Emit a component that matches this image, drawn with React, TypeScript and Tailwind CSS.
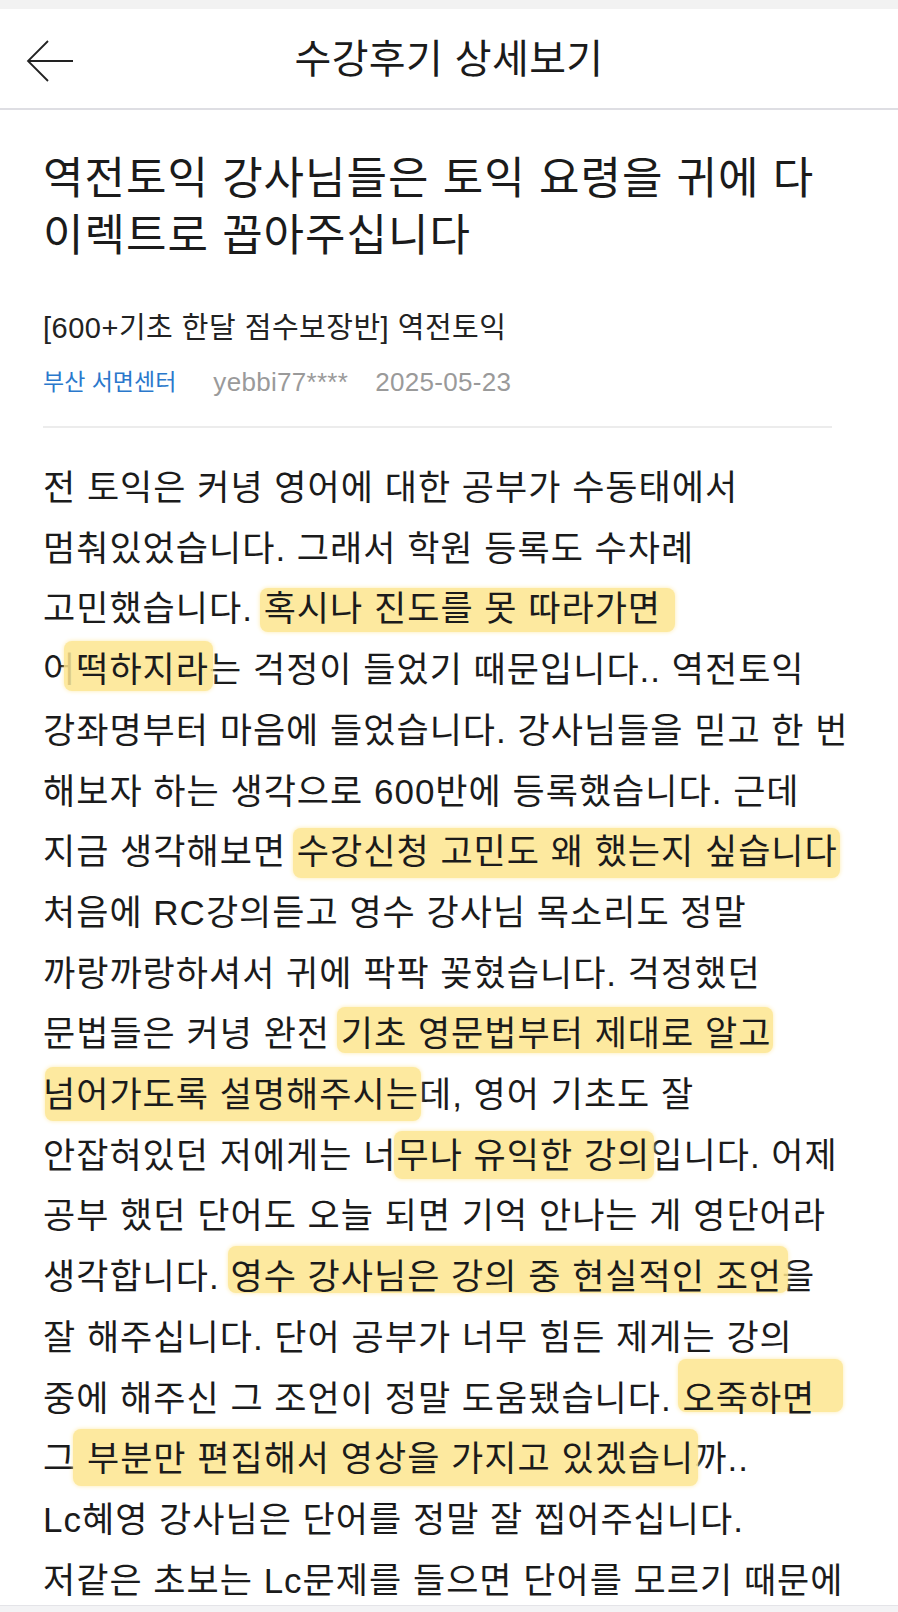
import React from "react";

const FONT = "font-['Liberation_Sans','Noto_Sans_CJK_KR',sans-serif]";

type MarkProps = { children: React.ReactNode; box?: string };

// marker-pen style highlight drawn behind the words
const Mark: React.FC<MarkProps> = ({ children, box = "left-[-2px] right-[-2px] top-[12%] bottom-[8%]" }) => (
  <span className="relative inline-block">
    <span className={`absolute rounded-[8px] bg-[#fde68f] opacity-85 shadow-[0_0_4px_#fde9a0] ${box}`} />
    <span className="relative">{children}</span>
  </span>
);

const lines: React.ReactNode[] = [
  <>전 토익은 커녕 영어에 대한 공부가 수동태에서</>,
  <>멈춰있었습니다. 그래서 학원 등록도 수차례</>,
  <>
    고민했습니다. <Mark box="left-[-4px] right-[-14px] top-[14%] bottom-[14%]">혹시나 진도를 못 따라가면</Mark>
  </>,
  <>
    어<Mark box="left-[-12px] right-[-4px] top-[2%] bottom-[16%]">떡하지라</Mark>는 걱정이 들었기 때문입니다.. 역전토익
  </>,
  <>강좌명부터 마음에 들었습니다. 강사님들을 믿고 한 번</>,
  <>해보자 하는 생각으로 600반에 등록했습니다. 근데</>,
  <>
    지금 생각해보면 <Mark box="left-[-4px] right-[-2px] top-[10%] bottom-[8%]">수강신청 고민도 왜 했는지 싶습니다</Mark>
  </>,
  <>처음에 RC강의듣고 영수 강사님 목소리도 정말</>,
  <>까랑까랑하셔서 귀에 팍팍 꽂혔습니다. 걱정했던</>,
  <>
    문법들은 커녕 완전 <Mark box="left-[-4px] right-[-2px] top-[4%] bottom-[20%]">기초 영문법부터 제대로 알고</Mark>
  </>,
  <>
    <Mark box="left-[2px] right-[-2px] top-[4%] bottom-[8%]">넘어가도록 설명해주시는</Mark>데, 영어 기초도 잘
  </>,
  <>
    안잡혀있던 저에게는 너<Mark box="left-[-2px] right-[-4px] top-[8%] bottom-[12%]">무나 유익한 강의</Mark>입니다. 어제
  </>,
  <>공부 했던 단어도 오늘 되면 기억 안나는 게 영단어라</>,
  <>
    생각합니다. <Mark box="left-[-2px] right-[-6px] top-[-2%] bottom-[24%]">영수 강사님은 강의 중 현실적인 조언</Mark>을
  </>,
  <>잘 해주십니다. 단어 공부가 너무 힘든 제게는 강의</>,
  <>
    중에 해주신 그 조언이 정말 도움됐습니다. <Mark box="left-[-4px] right-[-28px] top-[-16%] bottom-[28%]">오죽하면</Mark>
  </>,
  <>
    그 <Mark box="left-[-14px] right-[-4px] top-[0%] bottom-[6%]">부분만 편집해서 영상을 가지고 있겠습니</Mark>까..
  </>,
  <>Lc혜영 강사님은 단어를 정말 잘 찝어주십니다.</>,
  <>저같은 초보는 Lc문제를 들으면 단어를 모르기 때문에</>,
];

export default function App() {
  return (
    <div className={`min-h-screen bg-white text-[#1b1b1b] ${FONT}`}>
      <div className="h-[9px] bg-[#f2f2f2]" />
      <header className="relative flex h-[101px] items-center justify-center border-b-2 border-[#dedee3]">
        <button className="absolute left-[26px] top-[30px] text-[#222]" aria-label="back">
          <svg width="48" height="44" viewBox="0 0 48 44" fill="none" stroke="currentColor" strokeWidth="1.8">
            <path d="M22 2 L2 22 L22 42" />
            <path d="M2 22 H47" />
          </svg>
        </button>
        <h1 className="text-[40px] leading-none tracking-[0.4px]">수강후기 상세보기</h1>
      </header>

      <main className="pl-[43px] pr-[66px]">
        <h2 className="pt-[40px] text-[44px] leading-[57px] tracking-[1px] whitespace-nowrap">
          역전토익 강사님들은 토익 요령을 귀에 다
          <br />
          이렉트로 꼽아주십니다
        </h2>

        <p className="mt-[47px] whitespace-nowrap text-[29px] leading-[34px] tracking-[0.5px] text-[#222]">
          [600+기초 한달 점수보장반] 역전토익
        </p>

        <div className="mt-[22px] flex h-[30px] items-center whitespace-nowrap">
          <span className="text-[23px] text-[#2a78cc]">부산 서면센터</span>
          <span className="ml-[37px] text-[26px] tracking-[0.3px] text-[#9a9a9a]">yebbi77****</span>
          <span className="ml-[27px] text-[26px] tracking-[0.3px] text-[#9a9a9a]">2025-05-23</span>
        </div>

        <div className="mt-[29px] h-[2px] bg-[#ececec]" />

        <div className="mt-[30px] text-[35px] leading-[60.7px] tracking-[1px]">
          {lines.map((line, i) => (
            <div key={i} className="whitespace-nowrap">
              {line}
            </div>
          ))}
        </div>
      </main>

      <div className="fixed inset-x-0 bottom-0 h-[7px] border-t border-[#e4e4e8] bg-[#f3f3f5]" />
    </div>
  );
}
